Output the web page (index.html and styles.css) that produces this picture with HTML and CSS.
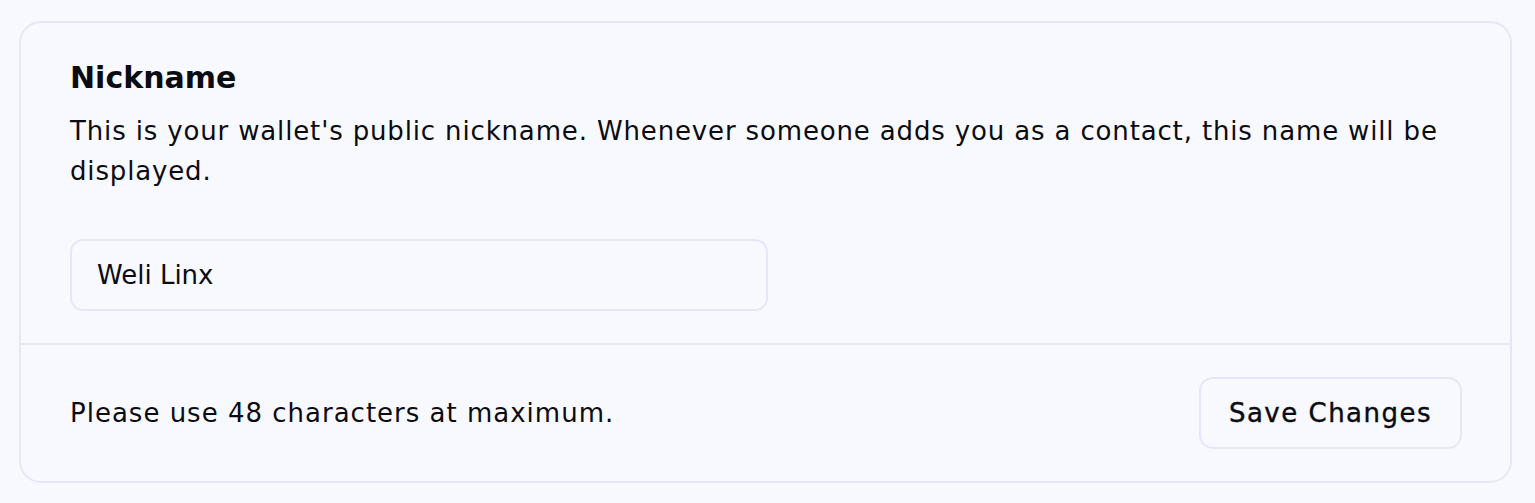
FILE: index.html
```html
<!DOCTYPE html>
<html lang="en">
<head>
<meta charset="utf-8">
<title>Nickname</title>
<link rel="stylesheet" href="styles.css">
</head>
<body>
  <section class="card">
    <div class="card-body">
      <h2 class="title">Nickname</h2>
      <p class="desc">This is your wallet's public nickname. Whenever someone adds you as a contact, this name will be displayed.</p>
      <input class="field" type="text" value="Weli Linx">
    </div>
    <div class="card-footer">
      <span class="hint">Please use 48 characters at maximum.</span>
      <button class="btn" type="button">Save Changes</button>
    </div>
  </section>
</body>
</html>
```

FILE: styles.css
```css
html, body {
  margin: 0;
  background: #f8f9fe;
}
body {
  padding: 21px 23px 21px 19px;
  font-family: "DejaVu Sans", Inter, sans-serif;
  color: #0b0b12;
}
.card {
  border: 2px solid #e6e6fb;
  border-radius: 22px;
  background: #f8f9fe;
}
.card-body {
  padding: 32px 48px 32px 49px;
}
.title {
  margin: 0;
  font-size: 30px;
  font-weight: 700;
  line-height: 46px;
}
.desc {
  margin: 10px 0 0;
  font-size: 26px;
  line-height: 40px;
  letter-spacing: 0.85px;
}
.field {
  display: block;
  box-sizing: border-box;
  margin-top: 48px;
  width: 698px;
  height: 72px;
  padding: 0 25px;
  border: 2px solid #e6e6fb;
  border-radius: 13px;
  background: #f8f9fe;
  font-family: inherit;
  font-size: 26px;
  color: #0b0b12;
  outline: none;
}
.card-footer {
  border-top: 2px solid #e6e6fb;
  padding: 32px 48px 32px 49px;
  display: flex;
  align-items: center;
  justify-content: space-between;
}
.hint {
  font-size: 26px;
  letter-spacing: 1px;
}
.btn {
  box-sizing: border-box;
  height: 72px;
  width: 263px;
  padding: 0;
  border: 2px solid #e6e6fb;
  border-radius: 14px;
  background: #f8f9fe;
  font-family: inherit;
  font-size: 26px;
  letter-spacing: 1.5px;
  -webkit-text-stroke: 0.4px #0b0b12;
  color: #0b0b12;
  cursor: pointer;
}
```
